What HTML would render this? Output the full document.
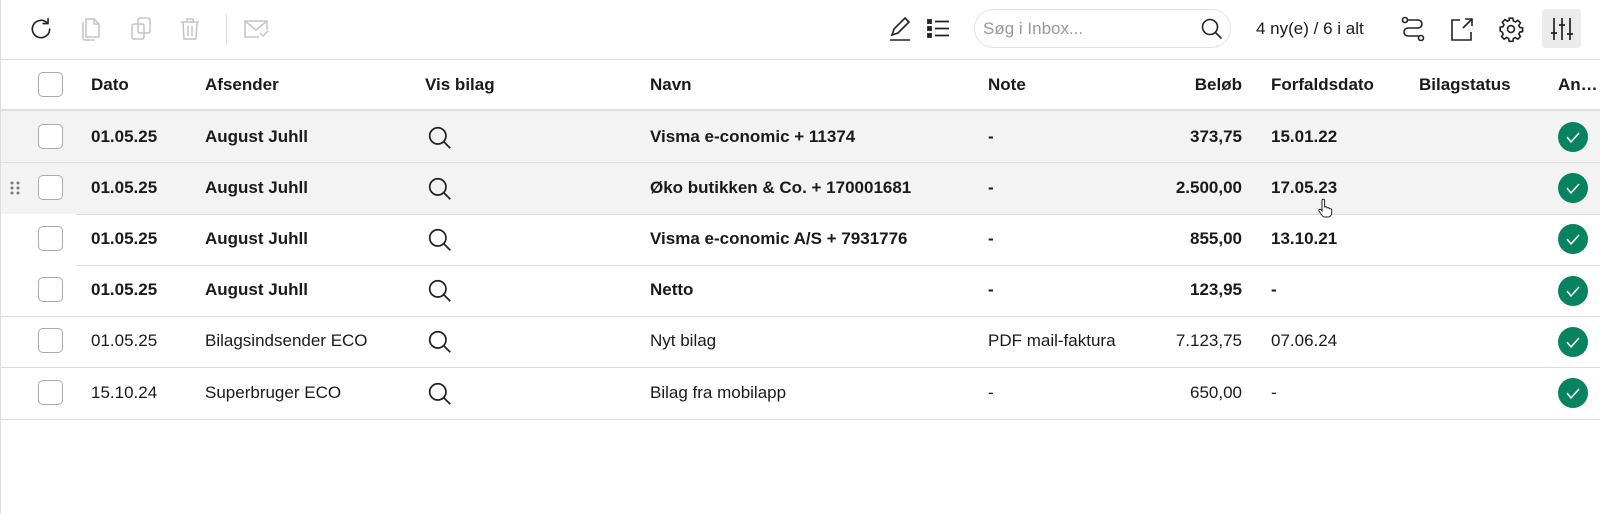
<!DOCTYPE html>
<html><head><meta charset="utf-8"><style>
*{box-sizing:border-box;margin:0;padding:0}
body{width:1600px;height:514px;background:#fff;font-family:"Liberation Sans",Arial,sans-serif;color:#1a1a1a;position:relative;overflow:hidden;font-size:17px}
.a{position:absolute}
.lb{position:absolute;left:0;top:0;width:1px;height:514px;background:#ddd}
.hl{position:absolute;left:0;right:0;height:1px;background:#ddd}
.cb{position:absolute;left:38px;width:25px;height:25px;border:1px solid #aaa;border-radius:5px;background:#fff}
.t{position:absolute;white-space:nowrap;line-height:20px}
.b{font-weight:bold}
.r{text-align:right}
.ok{position:absolute;left:1558px;width:30px;height:30px;border-radius:50%;background:#07835f}
svg{position:absolute;overflow:visible}
</style></head><body>
<div class="lb"></div>
<svg style="left:28px;top:16px" width="26" height="26" viewBox="0 0 24 24" fill="none" stroke="#222" stroke-width="1.5" stroke-linecap="round"><path d="M20 12a8 8 0 1 1-2.3-5.6"/><path d="M18.5 2.5v4.5h-4.5"/></svg>
<svg style="left:80px;top:16px" width="22" height="26" viewBox="0 0 22 26" fill="none" stroke="#c4c4c4" stroke-width="1.5"><path d="M6 3h8l5 5v12a1 1 0 0 1-1 1H6z"/><path d="M14 3v5h5"/><path d="M3 6v16a2 2 0 0 0 2 2h10"/></svg>
<svg style="left:129px;top:16px" width="24" height="26" viewBox="0 0 24 26" fill="none" stroke="#c4c4c4" stroke-width="1.5"><rect x="9" y="2" width="12" height="15" rx="2"/><rect x="3" y="8" width="12" height="15" rx="2"/></svg>
<svg style="left:178px;top:16px" width="24" height="26" viewBox="0 0 24 26" fill="none" stroke="#c4c4c4" stroke-width="1.5"><path d="M3 6h18M9 6V3h6v3M5 6l1 17h12l1-17M10 10v10M14 10v10"/></svg>
<div class="a" style="left:226px;top:14px;width:1px;height:30px;background:#ddd"></div>
<svg style="left:243px;top:18px" width="28" height="22" viewBox="0 0 28 22" fill="none" stroke="#c4c4c4" stroke-width="1.5"><path d="M16 19H2V3h22v9"/><path d="M2 3l11 9 11-9"/><path d="M17 15l3 3 5-5"/></svg>
<svg style="left:888px;top:16px" width="24" height="26" viewBox="0 0 24 26" fill="none" stroke="#222" stroke-width="1.6"><path d="M4 19l2-6L17 2l4 4-11 11z"/><path d="M2 24h20"/></svg>
<svg style="left:926px;top:18px" width="26" height="22" viewBox="0 0 26 22" fill="none" stroke="#222" stroke-width="1.8"><rect x="2" y="2" width="3" height="3" fill="#222"/><rect x="2" y="9" width="3" height="3" fill="#222"/><rect x="2" y="16" width="3" height="3" fill="#222"/><path d="M9 3.5h14M9 10.5h14M9 17.5h14"/></svg>
<div class="a" style="left:974px;top:9px;width:257px;height:39px;border:1px solid #e3e3e3;border-radius:20px"></div>
<div class="t" style="left:983px;top:19px;color:#999;font-size:17px">Søg i Inbox...</div>
<svg style="left:1200px;top:17px" width="24" height="24" viewBox="0 0 24 24" fill="none" stroke="#222" stroke-width="1.6"><circle cx="10" cy="10" r="7.5"/><path d="M15.5 15.5l6 6"/></svg>
<div class="t" style="left:1256px;top:19px;font-size:17px">4 ny(e) / 6 i alt</div>
<svg style="left:1400px;top:16px" width="26" height="26" viewBox="0 0 26 26" fill="none" stroke="#222" stroke-width="1.6"><circle cx="5" cy="4" r="2.5"/><circle cx="21" cy="22" r="2.5"/><path d="M7.5 4H18a4 4 0 0 1 0 8H8a4 4 0 0 0 0 8h10.5"/></svg>
<svg style="left:1449px;top:16px" width="26" height="26" viewBox="0 0 26 26" fill="none" stroke="#222" stroke-width="1.6"><path d="M11 4H3v20h19v-8"/><path d="M14 12L23 3M16 3h7v7"/></svg>
<svg style="left:1498px;top:16px" width="26" height="26" viewBox="0 0 24 24" fill="none" stroke="#222" stroke-width="1.5"><circle cx="12" cy="12" r="3.2"/><path d="M10.3 2h3.4l.5 2.6 1.9.9 2.2-1.5 2.4 2.4-1.5 2.2.9 1.9 2.6.5v3.4l-2.6.5-.9 1.9 1.5 2.2-2.4 2.4-2.2-1.5-1.9.9-.5 2.6h-3.4l-.5-2.6-1.9-.9-2.2 1.5-2.4-2.4 1.5-2.2-.9-1.9L2 13.7v-3.4l2.6-.5.9-1.9L4 5.7l2.4-2.4 2.2 1.5 1.9-.9z"/></svg>
<div class="a" style="left:1542px;top:9px;width:39px;height:39px;background:#ebebeb;border-radius:4px"></div>
<svg style="left:1549px;top:16px" width="26" height="26" viewBox="0 0 26 26" fill="none" stroke="#222" stroke-width="1.7"><path d="M5 2v22M13 2v22M21 2v22"/><path d="M2 17h6M10 9h6M18 18h6"/></svg>
<div class="hl" style="top:59px"></div>
<div class="cb" style="top:72px"></div>
<div class="t b" style="left:91px;top:75px">Dato</div>
<div class="t b" style="left:205px;top:75px">Afsender</div>
<div class="t b" style="left:425px;top:75px">Vis bilag</div>
<div class="t b" style="left:650px;top:75px">Navn</div>
<div class="t b" style="left:988px;top:75px">Note</div>
<div class="t b r" style="left:1142px;width:100px;top:75px">Beløb</div>
<div class="t b" style="left:1271px;top:75px">Forfaldsdato</div>
<div class="t b" style="left:1419px;top:75px">Bilagstatus</div>
<div class="t b" style="left:1558px;top:75px">An…</div>
<div class="a" style="left:0;right:0;top:109px;height:2px;background:#ddd"></div>
<div class="a" style="left:1px;right:0;top:111px;height:51px;background:#f3f3f3"></div>
<div class="a" style="left:1px;right:0;top:163px;height:51px;background:#f3f3f3"></div>
<div class="hl" style="top:162px"></div>
<div class="hl" style="top:214px;left:76px"></div>
<div class="hl" style="top:265px;left:76px"></div>
<div class="hl" style="top:316px"></div>
<div class="hl" style="top:367px"></div>
<div class="hl" style="top:419px"></div>
<svg style="left:10px;top:181px" width="10" height="14"><g fill="#777"><circle cx="2" cy="2" r="1.5"/><circle cx="8" cy="2" r="1.5"/><circle cx="2" cy="7" r="1.5"/><circle cx="8" cy="7" r="1.5"/><circle cx="2" cy="12" r="1.5"/><circle cx="8" cy="12" r="1.5"/></g></svg>

<div class="cb" style="top:124px"></div><div class="cb" style="top:175px"></div><div class="cb" style="top:226px"></div><div class="cb" style="top:277px"></div><div class="cb" style="top:328px"></div><div class="cb" style="top:380px"></div>

<div class="t b" style="left:91px;top:127px">01.05.25</div><div class="t b" style="left:205px;top:127px">August Juhll</div><div class="t b" style="left:650px;top:127px">Visma e-conomic + 11374</div><div class="t b" style="left:988px;top:127px">-</div><div class="t b r" style="left:1142px;width:100px;top:127px">373,75</div><div class="t b" style="left:1271px;top:127px">15.01.22</div>
<div class="t b" style="left:91px;top:178px">01.05.25</div><div class="t b" style="left:205px;top:178px">August Juhll</div><div class="t b" style="left:650px;top:178px">Øko butikken &amp; Co. + 170001681</div><div class="t b" style="left:988px;top:178px">-</div><div class="t b r" style="left:1142px;width:100px;top:178px">2.500,00</div><div class="t b" style="left:1271px;top:178px">17.05.23</div>
<div class="t b" style="left:91px;top:229px">01.05.25</div><div class="t b" style="left:205px;top:229px">August Juhll</div><div class="t b" style="left:650px;top:229px">Visma e-conomic A/S + 7931776</div><div class="t b" style="left:988px;top:229px">-</div><div class="t b r" style="left:1142px;width:100px;top:229px">855,00</div><div class="t b" style="left:1271px;top:229px">13.10.21</div>
<div class="t b" style="left:91px;top:280px">01.05.25</div><div class="t b" style="left:205px;top:280px">August Juhll</div><div class="t b" style="left:650px;top:280px">Netto</div><div class="t b" style="left:988px;top:280px">-</div><div class="t b r" style="left:1142px;width:100px;top:280px">123,95</div><div class="t b" style="left:1271px;top:280px">-</div>
<div class="t" style="left:91px;top:331px">01.05.25</div><div class="t" style="left:205px;top:331px">Bilagsindsender ECO</div><div class="t" style="left:650px;top:331px">Nyt bilag</div><div class="t" style="left:988px;top:331px">PDF mail-faktura</div><div class="t r" style="left:1142px;width:100px;top:331px">7.123,75</div><div class="t" style="left:1271px;top:331px">07.06.24</div>
<div class="t" style="left:91px;top:383px">15.10.24</div><div class="t" style="left:205px;top:383px">Superbruger ECO</div><div class="t" style="left:650px;top:383px">Bilag fra mobilapp</div><div class="t" style="left:988px;top:383px">-</div><div class="t r" style="left:1142px;width:100px;top:383px">650,00</div><div class="t" style="left:1271px;top:383px">-</div>

<svg style="left:427px;top:125px" width="26" height="26" viewBox="0 0 24 24" fill="none" stroke="#222" stroke-width="1.6"><circle cx="10" cy="10" r="7.5"/><path d="M15.5 15.5l6 6"/></svg>
<svg style="left:427px;top:176px" width="26" height="26" viewBox="0 0 24 24" fill="none" stroke="#222" stroke-width="1.6"><circle cx="10" cy="10" r="7.5"/><path d="M15.5 15.5l6 6"/></svg>
<svg style="left:427px;top:227px" width="26" height="26" viewBox="0 0 24 24" fill="none" stroke="#222" stroke-width="1.6"><circle cx="10" cy="10" r="7.5"/><path d="M15.5 15.5l6 6"/></svg>
<svg style="left:427px;top:278px" width="26" height="26" viewBox="0 0 24 24" fill="none" stroke="#222" stroke-width="1.6"><circle cx="10" cy="10" r="7.5"/><path d="M15.5 15.5l6 6"/></svg>
<svg style="left:427px;top:329px" width="26" height="26" viewBox="0 0 24 24" fill="none" stroke="#222" stroke-width="1.6"><circle cx="10" cy="10" r="7.5"/><path d="M15.5 15.5l6 6"/></svg>
<svg style="left:427px;top:381px" width="26" height="26" viewBox="0 0 24 24" fill="none" stroke="#222" stroke-width="1.6"><circle cx="10" cy="10" r="7.5"/><path d="M15.5 15.5l6 6"/></svg>

<div class="ok" style="top:122px"></div><div class="ok" style="top:173px"></div><div class="ok" style="top:224px"></div><div class="ok" style="top:276px"></div><div class="ok" style="top:327px"></div><div class="ok" style="top:378px"></div>
<svg style="left:1558px;top:122px" width="30" height="290" fill="none" stroke="#fff" stroke-width="1.5"><path d="M9 15l4 5 8-9"/><path d="M9 66l4 5 8-9"/><path d="M9 117l4 5 8-9"/><path d="M9 169l4 5 8-9"/><path d="M9 220l4 5 8-9"/><path d="M9 271l4 5 8-9"/></svg>
<svg style="left:1318px;top:199px" width="16" height="20" viewBox="0 0 16 20" fill="#fff" stroke="#222" stroke-width="1"><path d="M4 1.5a1.3 1.3 0 0 1 2.6 0V8l1-.2a1.2 1.2 0 0 1 1.4.8l.1.2 1-.1a1.2 1.2 0 0 1 1.3.9l1 .1a1.2 1.2 0 0 1 1.3 1.2V14c0 2-1.5 4-3.5 4H7c-1.5 0-2.5-.8-3.3-2L1 12c-.5-.8 0-1.8 1-1.8.5 0 1 .3 1.2.7L4 12z"/></svg>
</body></html>
